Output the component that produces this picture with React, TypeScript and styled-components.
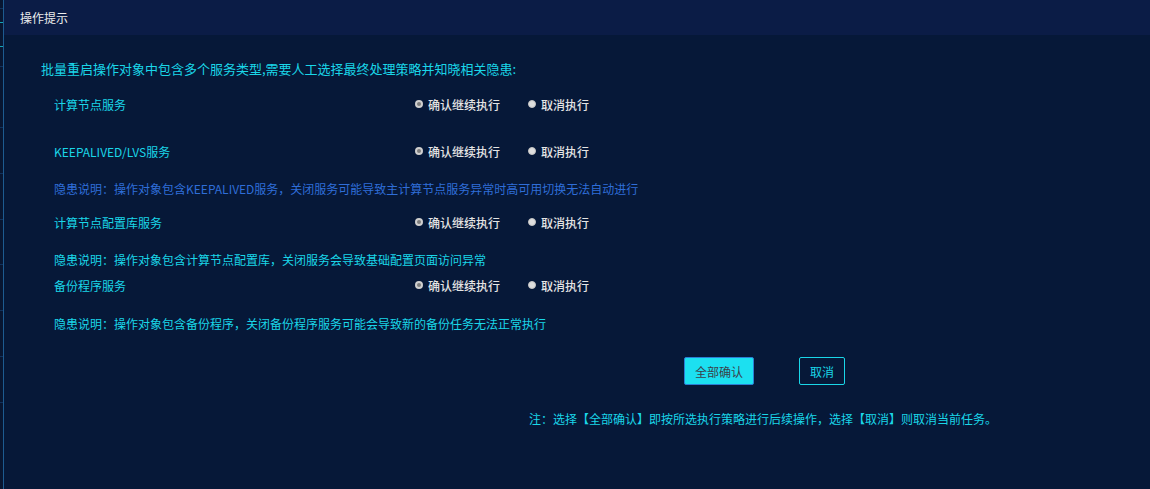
import React from 'react'
import styled, { createGlobalStyle } from 'styled-components'

const GlobalStyle = createGlobalStyle`
  html, body {
    margin: 0;
    padding: 0;
    background: #07152e;
  }
  body {
    font-family: "Noto Sans CJK SC", "Noto Sans", sans-serif;
    font-size: 12px;
  }
`

const Page = styled.div`
  display: flex;
  width: 1150px;
  height: 489px;
  overflow: hidden;
`

// strip of the page behind the dialog
const Backdrop = styled.div`
  width: 3px;
  flex: none;
  display: flex;
  flex-direction: column;
  background: #081631;
`

const Tick = styled.div<{ $top: number; $color: string }>`
  margin-top: ${({ $top }) => $top}px;
  height: 1px;
  background: ${({ $color }) => $color};
`

const Dialog = styled.div`
  flex: 1;
  display: flex;
  flex-direction: column;
  border-left: 1px solid #1d5b90;
  background: #061838;
`

const Header = styled.div`
  height: 35px;
  display: flex;
  align-items: center;
  padding-left: 16px;
  background: #0b1c46;
  color: #ececec;
  font-size: 12px;
  padding-bottom: 1px;
  box-sizing: border-box;
`

const Body = styled.div`
  display: flex;
  flex-direction: column;
  padding: 24px 0 0 37px;
`

const Prompt = styled.div`
  height: 20px;
  line-height: 20px;
  color: #1ad6e8;
  font-size: 13px;
`

const List = styled.div`
  display: flex;
  flex-direction: column;
  padding-left: 13px;
`

const Row = styled.div<{ $gap: number }>`
  display: flex;
  align-items: center;
  height: 20px;
  margin-top: ${({ $gap }) => $gap}px;
`

const ServiceName = styled.div`
  width: 361px;
  color: #1ad6e8;
  font-size: 12px;
`

const Option = styled.label`
  display: flex;
  align-items: center;
  gap: 5px;
  margin-right: 28px;
  color: #e4e4e4;
  font-size: 12px;
  font-weight: 500;
  cursor: pointer;
`

const Dot = styled.span<{ $checked: boolean }>`
  width: 8px;
  height: 8px;
  border-radius: 50%;
  box-sizing: border-box;
  background: ${({ $checked }) => ($checked ? '#7c7c7c' : '#dedede')};
  border: ${({ $checked }) => ($checked ? '2px solid #cfcfcf' : '1px solid #c4c4c4')};
`

const Hazard = styled.div<{ $gap: number; $dim?: boolean }>`
  height: 20px;
  line-height: 20px;
  margin-top: ${({ $gap }) => $gap}px;
  color: ${({ $dim }) => ($dim ? '#2f6ed8' : '#1ad6e8')};
  font-size: 12px;
`

const Actions = styled.div`
  display: flex;
  gap: 45px;
  margin-top: 23px;
  padding-left: 643px;
`

const Button = styled.button<{ $primary?: boolean }>`
  height: 28px;
  padding: 0 10px;
  font-family: inherit;
  font-size: 12px;
  border-radius: 2px;
  cursor: pointer;
  background: ${({ $primary }) => ($primary ? '#1ce0f0' : 'transparent')};
  color: ${({ $primary }) => ($primary ? '#3a3f4a' : '#1ad6e8')};
  border: 1px solid ${({ $primary }) => ($primary ? '#2a7fd4' : '#1ad6e8')};
`

const Note = styled.div`
  margin-top: 24px;
  padding-left: 488px;
  height: 20px;
  line-height: 20px;
  color: #1ad6e8;
  font-size: 12px;
`

type Service = {
  name: string
  gap: number
  hazard?: string
  hazardGap?: number
  dim?: boolean
}

const services: Service[] = [
  { name: '计算节点服务', gap: 15 },
  {
    name: 'KEEPALIVED/LVS服务',
    gap: 27,
    hazard: '隐患说明：操作对象包含KEEPALIVED服务，关闭服务可能导致主计算节点服务异常时高可用切换无法自动进行',
    hazardGap: 18,
    dim: true,
  },
  {
    name: '计算节点配置库服务',
    gap: 13,
    hazard: '隐患说明：操作对象包含计算节点配置库，关闭服务会导致基础配置页面访问异常',
    hazardGap: 18,
  },
  {
    name: '备份程序服务',
    gap: 5,
    hazard: '隐患说明：操作对象包含备份程序，关闭备份程序服务可能会导致新的备份任务无法正常执行',
    hazardGap: 19,
  },
]

const ticks = [
  { top: 8, color: '#12325c' },
  { top: 13, color: '#14a3b6' },
  { top: 23, color: '#14a3b6' },
  { top: 19, color: '#12325c' },
  { top: 60, color: '#12325c' },
  { top: 45, color: '#12325c' },
  { top: 45, color: '#12325c' },
  { top: 44, color: '#12325c' },
  { top: 45, color: '#12325c' },
  { top: 45, color: '#12325c' },
  { top: 45, color: '#12325c' },
]

const App = () => {
  const [choice, setChoice] = React.useState<Record<number, 'go' | 'cancel'>>({
    0: 'go',
    1: 'go',
    2: 'go',
    3: 'go',
  })

  return (
    <Page>
      <GlobalStyle />
      <Backdrop>
        {ticks.map((t, i) => (
          <Tick key={i} $top={t.top} $color={t.color} />
        ))}
      </Backdrop>
      <Dialog>
        <Header>操作提示</Header>
        <Body>
          <Prompt>批量重启操作对象中包含多个服务类型,需要人工选择最终处理策略并知晓相关隐患:</Prompt>
          <List>
            {services.map((s, i) => (
              <React.Fragment key={s.name}>
                <Row $gap={s.gap}>
                  <ServiceName>{s.name}</ServiceName>
                  <Option onClick={() => setChoice({ ...choice, [i]: 'go' })}>
                    <Dot $checked={choice[i] === 'go'} />
                    确认继续执行
                  </Option>
                  <Option onClick={() => setChoice({ ...choice, [i]: 'cancel' })}>
                    <Dot $checked={choice[i] === 'cancel'} />
                    取消执行
                  </Option>
                </Row>
                {s.hazard && (
                  <Hazard $gap={s.hazardGap || 0} $dim={s.dim}>
                    {s.hazard}
                  </Hazard>
                )}
              </React.Fragment>
            ))}
          </List>
          <Actions>
            <Button $primary>全部确认</Button>
            <Button>取消</Button>
          </Actions>
          <Note>注：选择【全部确认】即按所选执行策略进行后续操作，选择【取消】则取消当前任务。</Note>
        </Body>
      </Dialog>
    </Page>
  )
}

export default App
